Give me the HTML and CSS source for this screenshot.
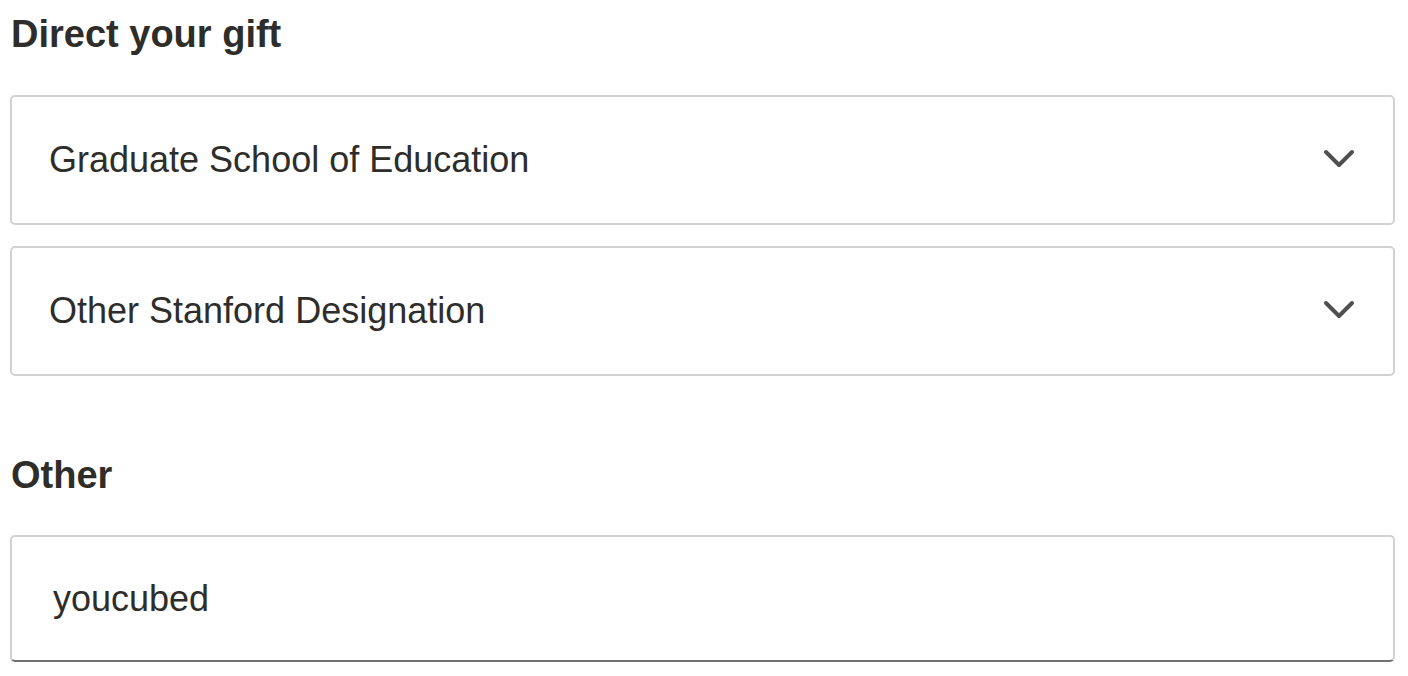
FILE: index.html
```html
<!DOCTYPE html>
<html lang="en">
<head>
<meta charset="utf-8">
<title>Direct your gift</title>
<link rel="stylesheet" href="styles.css">
</head>
<body>
<main class="form">
  <h2 class="label first">Direct your gift</h2>
  <div class="select">
    <span class="value">Graduate School of Education</span>
    <svg class="chev" width="34" height="22" viewBox="0 0 34 22"><polyline points="4,4 17,17 30,4" fill="none" stroke="#4f4f4f" stroke-width="4" stroke-linecap="round" stroke-linejoin="round"/></svg>
  </div>
  <div class="select">
    <span class="value">Other Stanford Designation</span>
    <svg class="chev" width="34" height="22" viewBox="0 0 34 22"><polyline points="4,4 17,17 30,4" fill="none" stroke="#4f4f4f" stroke-width="4" stroke-linecap="round" stroke-linejoin="round"/></svg>
  </div>
  <h2 class="label second">Other</h2>
  <div class="input"><span class="value">youcubed</span></div>
</main>
</body>
</html>
```
FILE: styles.css
```css
html, body {
  margin: 0;
  padding: 0;
  background: #ffffff;
}
body {
  font-family: "Liberation Sans", Arial, sans-serif;
  color: #2e2d29;
}
.form {
  padding: 12px 13px 0 10px;
  display: flex;
  flex-direction: column;
}
.label {
  margin: 0;
  font-size: 38px;
  line-height: 44px;
  font-weight: bold;
  padding-left: 1px;
}
.label.first {
  margin-bottom: 39px;
}
.label.second {
  margin-top: 77px;
  margin-bottom: 38px;
}
.select, .input {
  box-sizing: border-box;
  height: 130px;
  border: 2px solid #d2d2d2;
  border-radius: 5px;
  display: flex;
  align-items: center;
  justify-content: space-between;
  padding: 0 37px 0 37px;
  font-size: 36px;
  color: #2e2d29;
}
.select + .select {
  margin-top: 21px;
}
.input {
  height: 127px;
  border-bottom-color: #717171;
  padding-left: 41px;
}
.chev {
  display: block;
  margin-top: -2px;
}
```
